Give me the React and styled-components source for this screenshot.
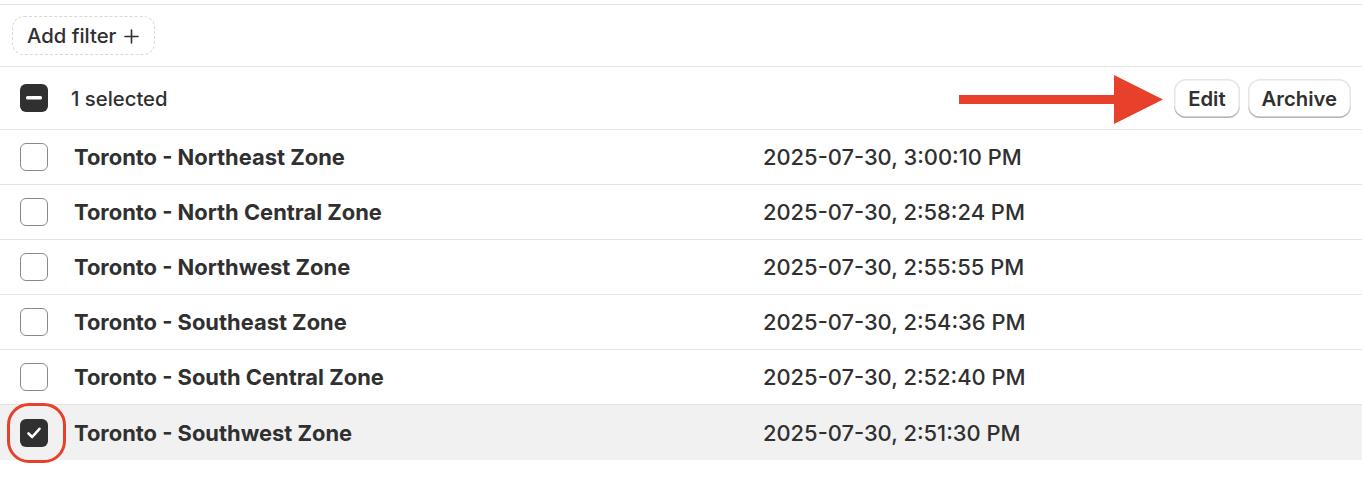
import React from "react";
import styled, { createGlobalStyle } from "styled-components";

const Global = createGlobalStyle`
  html, body { margin: 0; padding: 0; background: #fff; }
  body { font-family: Inter, "Noto Sans", sans-serif; color: #303030; }
  * { box-sizing: border-box; }
`;

const Page = styled.div`
  position: relative;
  width: 1362px;
  height: 482px;
  padding-top: 4px;
  background: #fff;
  overflow: hidden;
`;

const FilterBar = styled.div`
  display: flex;
  align-items: center;
  height: 63px;
  padding: 0 12px;
  border-top: 1px solid #e3e3e3;
  border-bottom: 1px solid #e3e3e3;
`;

const AddFilter = styled.button`
  display: inline-flex;
  align-items: center;
  gap: 8px;
  height: 39px;
  padding: 0 15px 0 14px;
  border: 1px dashed #d8d8d8;
  border-radius: 12px;
  background: #fff;
  font-family: inherit;
  font-size: 20.3px;
  font-weight: 450;
  color: #303030;
  cursor: pointer;
`;

const Plus = styled.svg`
  width: 15px;
  height: 15px;
  margin-top: 1px;
`;

const BulkBar = styled.div`
  display: flex;
  align-items: center;
  height: 63px;
  padding: 0 11px 0 20px;
  border-bottom: 1px solid #e3e3e3;
`;

const SelectedLabel = styled.span`
  margin-left: 23px;
  font-size: 20.3px;
  font-weight: 450;
  flex: 1;
`;

const Actions = styled.div`
  display: flex;
  gap: 8px;
`;

const Button = styled.button`
  height: 39px;
  padding: 0 ${(p) => p.$px}px;
  border: none;
  border-radius: 12px;
  background: #fff;
  font-family: inherit;
  font-size: 20.3px;
  font-weight: 600;
  color: #303030;
  box-shadow: inset 0 -1.5px 0 0 #b5b5b5, inset 0 0 0 1.5px rgba(0, 0, 0, 0.1);
  cursor: pointer;
`;

const Box = styled.span`
  width: 28px;
  height: 28px;
  flex: none;
  border-radius: 6px;
  display: inline-flex;
  align-items: center;
  justify-content: center;
  background: ${(p) => (p.$on ? "#303030" : "#fff")};
  border: ${(p) => (p.$on ? "none" : "1.5px solid #8a8a8a")};
`;

const Row = styled.div`
  display: grid;
  grid-template-columns: 54px 689px 1fr;
  align-items: center;
  height: 55px;
  padding-left: 20px;
  border-bottom: ${(p) => (p.$last ? "none" : "1px solid #e3e3e3")};
  background: ${(p) => (p.$selected ? "#f1f1f1" : "#fff")};
`;

const Name = styled.span`
  font-size: 21.9px;
  font-weight: 650;
  color: #303030;
`;

const DateCell = styled.span`
  font-size: 21.9px;
  font-weight: 450;
  color: #303030;
`;

const Arrow = styled.svg`
  position: absolute;
  left: 958px;
  top: 74px;
  width: 206px;
  height: 51px;
`;

const Highlight = styled.div`
  position: absolute;
  left: 7px;
  top: 403px;
  width: 59px;
  height: 60px;
  border: 3.5px solid #e8412b;
  border-radius: 22px;
`;

const rows = [
  ["Toronto - Northeast Zone", "2025-07-30, 3:00:10 PM"],
  ["Toronto - North Central Zone", "2025-07-30, 2:58:24 PM"],
  ["Toronto - Northwest Zone", "2025-07-30, 2:55:55 PM"],
  ["Toronto - Southeast Zone", "2025-07-30, 2:54:36 PM"],
  ["Toronto - South Central Zone", "2025-07-30, 2:52:40 PM"],
  ["Toronto - Southwest Zone", "2025-07-30, 2:51:30 PM"],
];

const Minus = () => (
  <svg width="16" height="4" viewBox="0 0 16 4">
    <rect x="0" y="0" width="16" height="3.5" rx="1.5" fill="#fff" />
  </svg>
);

const Check = () => (
  <svg width="16" height="14" viewBox="0 0 16 14">
    <path d="M2.5 7.5 L6.2 11 L13.5 2.8" fill="none" stroke="#fff" strokeWidth="2.6" strokeLinecap="round" strokeLinejoin="round" />
  </svg>
);

export default function App() {
  return (
    <Page>
      <Global />
      <FilterBar>
        <AddFilter>
          Add filter
          <Plus viewBox="0 0 15 15">
            <path d="M7.5 1 V14 M1 7.5 H14" stroke="#303030" strokeWidth="1.6" strokeLinecap="round" />
          </Plus>
        </AddFilter>
      </FilterBar>
      <BulkBar>
        <Box $on>
          <Minus />
        </Box>
        <SelectedLabel>1 selected</SelectedLabel>
        <Actions>
          <Button $px={14}>Edit</Button>
          <Button $px={14}>Archive</Button>
        </Actions>
      </BulkBar>
      {rows.map(([name, date], i) => {
        const sel = i === rows.length - 1;
        return (
          <Row key={name} $selected={sel} $last={sel}>
            <Box $on={sel}>{sel && <Check />}</Box>
            <Name>{name}</Name>
            <DateCell>{date}</DateCell>
          </Row>
        );
      })}
      <Arrow viewBox="0 0 206 51">
        <rect x="1" y="21" width="157" height="9" fill="#e8412b" />
        <polygon points="156,1 205,25.5 156,50" fill="#e8412b" />
      </Arrow>
      <Highlight />
    </Page>
  );
}
